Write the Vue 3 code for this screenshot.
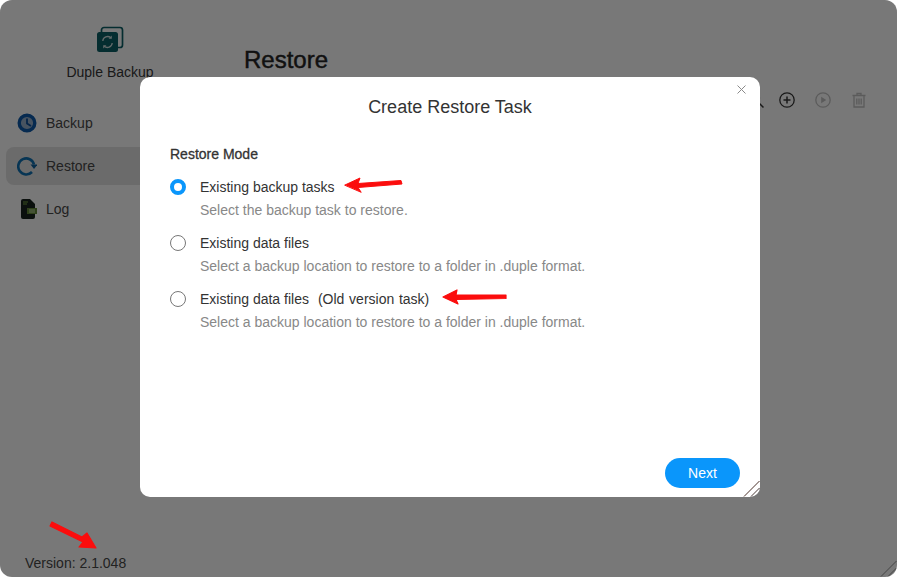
<template>
  <div class="window">
    <aside class="sidebar">
      <div class="brand">
        <svg class="brand-icon" width="28" height="28" viewBox="0 0 28 28">
          <rect x="5.500" y="1.500" width="21" height="20" rx="2.500" fill="none" stroke="#0b5a60" stroke-width="1.700" />
          <rect x="1" y="6" width="21" height="20" rx="2.500" fill="#0b5a60" />
          <path d="M6.800 15a4.800 4.800 0 0 1 8-3.200M16.200 17a4.800 4.800 0 0 1-8 3.200" fill="none" stroke="#c4d3d3" stroke-width="1.300" />
          <path d="M15.800 9.500v3.200h-3.200zM7.200 22.500v-3.200h3.200z" fill="#c4d3d3" />
        </svg>
        <div class="brand-name">Duple Backup</div>
      </div>
      <nav class="nav">
        <div class="nav-item">
          <svg width="20" height="20" viewBox="0 0 20 20">
            <circle cx="10" cy="10" r="7.800" fill="#8fa6c0" stroke="#0c55a0" stroke-width="3.400" />
            <path d="M10 5.500V10.500L14 13" fill="none" stroke="#0c4a90" stroke-width="1.800" />
          </svg>
          <span>Backup</span>
        </div>
        <div class="nav-item active">
          <svg width="20" height="20" viewBox="0 0 20 20">
            <path d="M15 16A8 8 0 1 1 17 8.500" fill="none" stroke="#0f6aa8" stroke-width="2.600" />
            <path d="M13.500 8.500H20.500L17 13z" fill="#0d5a94" />
          </svg>
          <span>Restore</span>
        </div>
        <div class="nav-item">
          <svg width="20" height="20" viewBox="0 0 20 20">
            <path d="M4 2a2 2 0 0 1 2-2h7l5 5V18a2 2 0 0 1-2 2H6a2 2 0 0 1-2-2z" fill="#16211c" />
            <path d="M6 3h5M6 5h4" stroke="#6f9a3c" stroke-width="1" />
            <rect x="10" y="9" width="10" height="6" fill="#5c8034" />
            <path d="M12 11h6M12 13h6" stroke="#b8cca0" stroke-width="1" />
          </svg>
          <span>Log</span>
        </div>
      </nav>
      <div class="version">Version: 2.1.048</div>
    </aside>

    <main class="content">
      <header class="content-head">
        <h1>Restore</h1>
        <div class="tools">
          <svg class="search" width="18" height="18" viewBox="0 0 18 18">
            <circle cx="7" cy="7" r="5.500" fill="none" stroke="#333" stroke-width="1.300" />
            <path d="M11 11l5.500 5.500" stroke="#333" stroke-width="1.500" />
          </svg>
          <svg width="18" height="18" viewBox="0 0 18 18">
            <circle cx="9" cy="9" r="7.200" fill="none" stroke="#333" stroke-width="1.300" />
            <path d="M5.500 9h7M9 5.500v7" stroke="#333" stroke-width="1.500" />
          </svg>
          <svg class="off" width="18" height="18" viewBox="0 0 18 18">
            <circle cx="9" cy="9" r="7.200" fill="none" stroke="#333" stroke-width="1.300" />
            <path d="M7.200 5.700l5 3.300-5 3.300z" fill="#333" />
          </svg>
          <svg class="off" width="18" height="18" viewBox="0 0 18 18">
            <path d="M2.500 4.500h13M7 4.500V2.500h4v2M4 4.500V16h10V4.500" fill="none" stroke="#333" stroke-width="1.300" />
            <path d="M6.800 7.500v6M9 7.500v6M11.200 7.500v6" stroke="#333" stroke-width="1.300" />
          </svg>
        </div>
      </header>
    </main>

    <div class="mask">
      <div class="modal">
        <button class="close" aria-label="Close">
          <svg width="9" height="9" viewBox="0 0 9 9">
            <path d="M.5.500l8 8M8.500.500l-8 8" stroke="#8a8a8a" stroke-width="1" />
          </svg>
        </button>
        <h2>Create Restore Task</h2>
        <div class="form-label">Restore Mode</div>
        <div class="options">
          <div v-for="opt in options" :key="opt.desc + opt.label + opt.note" class="option">
            <div class="option-row">
              <span class="radio" :class="{ checked: opt.checked }"></span>
              <span class="option-label">{{ opt.label }}<span v-if="opt.note" class="option-note">{{ opt.note }}</span></span>
            </div>
            <div class="option-desc">{{ opt.desc }}</div>
          </div>
        </div>
        <div class="modal-foot">
          <button class="next">Next</button>
        </div>
        <svg class="resize" width="18" height="18" viewBox="0 0 18 18">
          <path d="M2 17.500L17.500 2" stroke="#4a3028" stroke-width="1" />
          <path d="M9 17.500L17.500 9" stroke="#4a3a38" stroke-width="1" />
        </svg>
      </div>
    </div>

    <svg class="resize-window" width="18" height="18" viewBox="0 0 18 18">
      <path d="M2 17.500L17.500 2" stroke="#444" stroke-width="1" />
      <path d="M9 17.500L17.500 9" stroke="#444" stroke-width="1" />
    </svg>

    <!-- red annotations -->
    <svg class="marks" width="897" height="577" viewBox="0 0 897 577">
      <g fill="#fb0d0d" stroke="#fb0d0d" stroke-linecap="round" stroke-linejoin="round">
        <path d="M345 185L360 178L358 183.500L401 180.500L402 184L358 187.500L361 192z" stroke-width="1" />
        <path d="M443 297L457 290L456 295L506 295L506 298.500L456 299.500L458 304z" stroke-width="1.200" />
        <path d="M52 522L82 537L87 533L96 548L79 547L83 542L50 526z" stroke-width="1.200" />
      </g>
    </svg>
  </div>
</template>

<script setup>
const options = [
  { label: 'Existing backup tasks', note: '', desc: 'Select the backup task to restore.', checked: true },
  { label: 'Existing data files', note: '', desc: 'Select a backup location to restore to a folder in .duple format.', checked: false },
  { label: 'Existing data files', note: '(Old version task)', desc: 'Select a backup location to restore to a folder in .duple format.', checked: false }
]
</script>

<style>
html, body { margin: 0; background: #fff; }
</style>

<style scoped>
.window {
  position: relative;
  width: 897px;
  height: 577px;
  display: flex;
  overflow: hidden;
  border-radius: 12px;
  background: #f1f1f1;
  font-family: "Liberation Sans", Arial, sans-serif;
  color: #333;
}

.sidebar {
  width: 225px;
  flex: none;
  display: flex;
  flex-direction: column;
  padding: 26px 0 0 6px;
  box-sizing: border-box;
}
.brand { width: 208px; display: flex; flex-direction: column; align-items: center; }
.brand-icon { display: block; }
.brand-name { margin-top: 9px; font-size: 14px; line-height: 18px; color: #333; }
.nav { margin-top: 23px; display: flex; flex-direction: column; gap: 5px; }
.nav-item {
  height: 38px;
  display: flex;
  align-items: center;
  gap: 9px;
  padding-left: 11px;
  border-radius: 8px;
  font-size: 14px;
  color: #444;
}
.nav-item.active { background: #d7d7d7; }
.version { margin-top: auto; margin-bottom: 6px; padding-left: 19px; font-size: 14px; line-height: 16px; color: #444; }

.content { flex: 1; padding: 0 29px 0 19px; }
.content-head { height: 120px; position: relative; }
h1 { margin: 0; padding-top: 45px; font-size: 24px; line-height: 30px; font-weight: 500; color: #222; -webkit-text-stroke: .45px #222; }
.tools { position: absolute; top: 91px; right: 0; display: flex; gap: 18px; }
.tools svg { display: block; }
.tools .search { margin-right: -5px; }
.tools .off { opacity: .3; }

.mask {
  position: absolute;
  inset: 0;
  background: rgba(0, 0, 0, .5);
  display: flex;
  align-items: center;
  justify-content: center;
  padding: 0 0 3px 3px;
  box-sizing: border-box;
}
.modal {
  position: relative;
  width: 620px;
  height: 420px;
  background: #fff;
  border-radius: 10px;
  padding: 0 20px 0 30px;
  box-sizing: border-box;
  display: flex;
  flex-direction: column;
}
h2 { margin: 0 5px 0 -5px; padding-top: 20px; text-align: center; font-size: 18px; line-height: 20px; font-weight: 400; color: #333; }
.close { position: absolute; top: 8px; right: 14px; width: 9px; height: 9px; padding: 0; border: 0; background: none; display: block; }
.close svg { display: block; }
.form-label { margin-top: 29px; font-size: 14px; line-height: 16px; font-weight: 500; color: #333; -webkit-text-stroke: .3px #333; }
.options { margin-top: 16px; display: flex; flex-direction: column; gap: 16px; }
.option-row { display: flex; align-items: center; gap: 14px; height: 18px; }
.radio { width: 16px; height: 16px; box-sizing: border-box; border: 1px solid #777; border-radius: 50%; background: #fff; flex: none; }
.radio.checked { border: 4.500px solid #0a96fb; }
.option-label { font-size: 14px; color: #333; }
.option-note { margin-left: 9px; word-spacing: .8px; }
.option-desc { margin-top: 6px; padding-left: 30px; font-size: 14px; line-height: 16px; color: #888; }
.modal-foot { margin-top: auto; padding-bottom: 9px; display: flex; justify-content: flex-end; }
.next { width: 75px; height: 30px; border: 0; border-radius: 15px; background: #0a96fb; color: #fff; font: 14px "Liberation Sans", Arial, sans-serif; padding: 0; }
.resize { position: absolute; right: 0; bottom: 0; }
.resize-window { position: absolute; right: 0; bottom: 0; }
.marks { position: absolute; left: 0; top: 0; pointer-events: none; }
</style>
